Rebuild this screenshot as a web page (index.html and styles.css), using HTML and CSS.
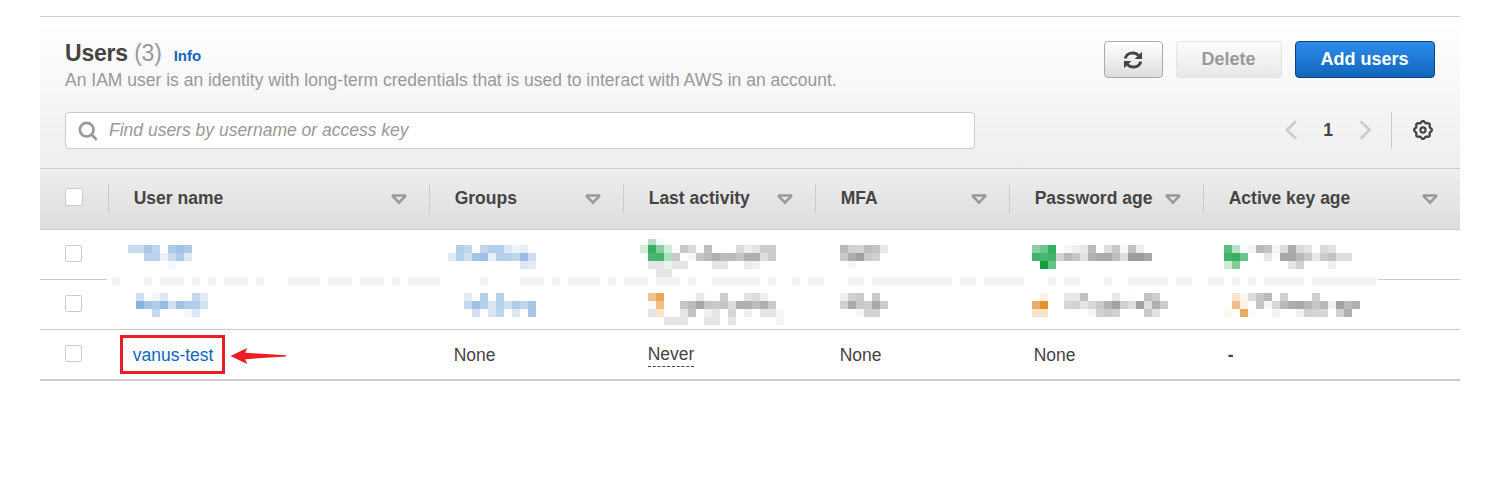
FILE: index.html
```html
<!DOCTYPE html>
<html lang="en">
<head>
<meta charset="utf-8">
<title>Users</title>
<link rel="stylesheet" href="styles.css">
</head>
<body>
<svg width="0" height="0" class="defs">
  <symbol id="sort" viewBox="0 0 18 11"><path d="M2.2 1.6H15.8L9 8.6Z" fill="none" stroke="#999" stroke-width="2.5" stroke-linejoin="miter" stroke-miterlimit="2"/></symbol>
</svg>
<main class="panel">
  <header class="top">
    <div class="heading">
      <div>
        <h1 class="title">Users <span class="count">(3)</span><a class="info">Info</a></h1>
        <p class="desc">An IAM user is an identity with long-term credentials that is used to interact with AWS in an account.</p>
      </div>
      <div class="actions">
        <button class="btn refresh" aria-label="Refresh">
          <svg width="20" height="20" viewBox="0 0 20 20"><path d="M2.3 8.6C3.4 2.7 11.6 1 15.6 5.6M17.7 11.4C16.6 17.3 8.4 19 4.4 14.4" fill="none" stroke="#444" stroke-width="2.9"/><path d="M19 1.8V9H11.6ZM1 18.2V11H8.4Z" fill="#444"/></svg>
        </button>
        <button class="btn delete">Delete</button>
        <button class="btn primary">Add users</button>
      </div>
    </div>
    <div class="tools">
      <div class="search">
        <svg width="20" height="20" viewBox="0 0 20 20" fill="none" stroke="#999" stroke-width="2.7"><circle cx="8.7" cy="8.7" r="6.8"/><path d="M13.4 13.4L18.7 18.7"/></svg>
        <span>Find users by username or access key</span>
      </div>
      <div class="pager">
        <svg width="12" height="20" viewBox="0 0 12 20" fill="none" stroke="#ccc" stroke-width="2.6"><path d="M11 1.2L2 10L11 18.8"/></svg>
        <b class="page">1</b>
        <svg width="12" height="20" viewBox="0 0 12 20" fill="none" stroke="#ccc" stroke-width="2.6"><path d="M1.6 1.2L10.6 10L1.6 18.8"/></svg>
        <span class="divider"></span>
        <svg id="gear" width="20" height="20" viewBox="0 0 20 20" fill="none" stroke="#444"><circle cx="10" cy="10" r="2.6" stroke-width="2.1"/><path id="gear-edge" stroke-width="2.3" stroke-linejoin="round"/></svg>
      </div>
    </div>
  </header>
  <section class="table">
    <div class="row head">
      <div class="check"><i class="box"></i></div>
      <div class="cell">User name<svg class="sort"><use href="#sort"/></svg></div>
      <div class="cell">Groups<svg class="sort"><use href="#sort"/></svg></div>
      <div class="cell">Last activity<svg class="sort"><use href="#sort"/></svg></div>
      <div class="cell">MFA<svg class="sort"><use href="#sort"/></svg></div>
      <div class="cell">Password age<svg class="sort"><use href="#sort"/></svg></div>
      <div class="cell last">Active key age<svg class="sort"><use href="#sort"/></svg></div>
    </div>
    <div class="row"><div class="check"><i class="box"></i></div></div>
    <div class="row"><div class="check"><i class="box"></i></div></div>
    <div class="row final">
      <div class="check"><i class="box"></i></div>
      <div class="cell"><a class="user">vanus-test</a></div>
      <div class="cell">None</div>
      <div class="cell"><span class="never">Never</span></div>
      <div class="cell">None</div>
      <div class="cell">None</div>
      <div class="cell dash">-</div>
    </div>
    <svg id="mosaic" class="mosaic" width="1420" height="100" viewBox="40 230 1420 100" shape-rendering="crispEdges"></svg>
    <div class="callout"></div>
    <svg class="arrow" width="58" height="18" viewBox="0 0 58 18"><path d="M0.5 9L17 1L15.3 5.8L56 8.3V9.5L15.3 12.2L17 17Z" fill="#ed1c24"/></svg>
  </section>
</main>
<script src="script.js"></script>
</body>
</html>
```

FILE: styles.css
```css
* { box-sizing: border-box; }
body { margin: 0; background: #fff; color: #444; font: 17.5px/22px "Liberation Sans", Arial, sans-serif; overflow: hidden; }
.defs { position: absolute; }
.panel { width: 1420px; margin: 16px 0 0 40px; }
.top { height: 153px; padding: 24px 25px 0; border-top: 1px solid #ccc; border-bottom: 1px solid #ccc; background: linear-gradient(#fff, #eee); }
.heading { display: flex; justify-content: space-between; height: 71px; }
.title { margin: 0; font-size: 23px; line-height: 25px; letter-spacing: -.2px; white-space: nowrap; }
.count { color: #999; font-weight: 400; }
.info { margin-left: 12px; font-size: 15px; letter-spacing: 0; color: #1166bb; }
.desc { margin: 3px 0 0; line-height: 18px; color: #999; white-space: nowrap; }
.actions { display: flex; gap: 13px; }
.btn { height: 37px; padding: 0 1px 1px 0; border: 1px solid #aaa; border-radius: 4px; font: bold 18px/34px "Liberation Sans", Arial, sans-serif; color: #444; background: linear-gradient(#fff, #ddd); }
.refresh { width: 59px; display: flex; align-items: center; justify-content: center; padding: 0 1px 0 0; }
.delete { width: 106px; color: #999; border-color: #e3e3e3; background: linear-gradient(#fcfcfc, #e8e8e8); }
.primary { width: 140px; color: #fff; border-color: #0a4280; background: linear-gradient(#2d8cec, #1166bb); }
.tools { display: flex; justify-content: space-between; }
.search { display: flex; align-items: center; gap: 11px; width: 910px; height: 37px; padding: 0 13px 1px 12px; border: 1px solid #ccc; border-radius: 4px; background: #fff; color: #999; font-style: italic; }
.search svg { margin-top: 2px; }
.pager { display: flex; align-items: center; height: 37px; }
.pager > svg { margin-top: -1px; }
.page { width: 62px; margin-top: -1px; text-align: center; }
.divider { width: 1px; height: 37px; margin: 0 21px 0 20px; background: #ccc; }
#gear { margin-right: 2px; }
.table { position: relative; }
.row { display: grid; grid-template-columns: 69px 321px 194px 192px 194px 194px 256px; align-items: center; height: 50px; border-bottom: 1px solid #ccc; }
.head { height: 61px; font-weight: 700; background: linear-gradient(#eee, #ddd); }
.check { padding-left: 25px; }
.head .check, .head .cell { height: 30px; border-right: 1px solid #ccc; display: flex; align-items: center; justify-content: space-between; }
.head .check { justify-content: flex-start; }
.box { display: block; width: 17px; height: 17px; border: 1px solid #ccc; border-radius: 2px; background: #fff; margin-top: -3px; }
.head .box { width: 18px; height: 18px; margin-top: -4px; }
.cell { padding-left: 24px; white-space: nowrap; }
.head .cell { padding: 0 21px 2px 24.7px; }
.head .last { padding-right: 21px; border-right: 0; }
.sort { width: 18px; height: 11px; flex: none; margin-top: 2px; }
.final { height: 51px; border-bottom-width: 2px; }
.final .cell { padding-left: 23.7px; }
.user { color: #1166bb; }
.never { display: inline-block; line-height: 24px; border-bottom: 1px dashed #444; margin-bottom: 1px; }
.dash { font-weight: 700; }
.mosaic { position: absolute; left: 0; top: 61px; }
.callout { position: absolute; left: 80px; top: 166px; width: 105px; height: 39px; border: 3px solid #ed1c24; }
.arrow { position: absolute; left: 190px; top: 178px; }
```

FILE: script.js
```js
// Each entry: top, left, then colours of consecutive 8px squares ("-" leaves one empty).
const runs = `
245 128 c8daee c8daee aac8e6 bdd4ec fcfeff b0cbe8 9fc1e4 afcae8
253 144 bbd3ec bbd3ec e9f1f9 c9dcf0 aecbe8 dde8f5
261 168 f5f9fd
293 136 cfdff0 - f1f6fa dce8f4 - - - c3d8ee e1ebf6
301 136 88b2de a8c6e7 afcbe8 98bce3 d1e0f2 a1c2e5 b1cde9 b1cde9 d3e2f2
309 152 c2d8ef - - - f5f9fd dde9f6
245 456 b3cee9 c0d7ee - bfd6ed b4cfe9 b4cfe9 dbe7f5 eff4fa e6eff8
253 448 e1ebf6 b4cfe9 cfdff1 a1c3e5 9fc0e4 e6eff8 b7d0ea b4cfe9 bdd4ec 9abce3 cbdcf0
261 520 dbe7f5 e2ecf7
293 464 e0eaf5 - b4cfe9 - b7d1ea
301 464 c4d9ef a1c2e5 b3cfe9 d9e6f2 b7d0ea cfdff2 b1cce9 bfd5ed a7c6e6
309 472 d2e1f2 - d9e6f2 bcd4ec - dbe7f4 - a9c6e7
239 648 b3dfc4 f6faf7
245 640 d3ecdd 34ae62 85ce9f d0ecdc fdfdfd c9c9c9 d9d9d9 fbfbfb bfbfbf - - - dbdbdb ececec e4e4e4 cccccc cccccc
253 648 49b772 43b56d ade0bf c8c8c8 - f6f6f6 c6c6c6 bcbcbc aeaeae bcbcbc bbbbbb c5c5c5 b0b0b0 b0b0b0 dddddd cccccc
261 648 e5e5e5 e5e5e5 e7f6ec e5e5e5 e5e5e5 - - - e6e6e6 e6e6e6 - - ebebeb f0f0f0
269 656 e5e5e5 e5e5e5
293 648 f2c28e eaa558 - - - fdfdfd e9e9e9 fdfdfd - cccccc - - e3e3e3 dbdbdb eeeeee
301 648 fefaf6 f2bd86 - - c6c6c6 bcbcbc a7a7a7 c6c6c6 cbcbcb c6c6c6 dddddd b0b0b0 b0b0b0 bdbdbd b0b0b0 cbcbcb
309 648 e6e6e6 fae4cc - - e5e5e5 c3c3c3 - f1f1f1 e6e6e6 - d7d7d7 - efefef - e6e6e6 e6e6e6 f5f5f5
317 664 e5e5e5 e5e5e5 e5e5e5 - - e6e6e6 e6e6e6 - e6e6e6 - - - - - f5f5f5
245 840 bababa d0d0d0 d3d3d3 bebebe c3c3c3 e9e9e9
253 840 c9c9c9 aeaeae a0a0a0 cacaca d0d0d0
261 848 f6f6f6
293 840 eeeeee d0d0d0 cacaca - cacaca
301 840 d0d0d0 aaaaaa c8c8c8 cccccc a8a8a8 cccccc
309 856 f6f6f6 d3d3d3 d3d3d3
245 1032 88d1a2 6cc48c 34b05e - f7f7f7 f0f0f0 e8e8e8 bbbbbb - dedede c8c8c8 f8f8f8 c2c2c2 ededed
253 1032 42b36b 49b671 43b36b d2d2d2 b9b9b9 c6c6c6 e2e2e2 b1b1b1 aaaaaa aaaaaa bfbfbf dedede 9c9c9c 9c9c9c a9a9a9
261 1040 129e3c 66c285
293 1040 fcf2e9 - - e7e7e7 e7e7e7 c1c1c1 - - - e8e8e8 - fdfdfd - c2c2c2 cecece
301 1032 ecab67 e4902c - - d6d6d6 d2d2d2 e3e3e3 d7d7d7 cacaca b3b3b3 a3a3a3 cfcfcf dedede a0a0a0 dedede b0b0b0 cccccc
309 1032 f8e3cc f8e3cc - - - - - f6f6f6 d2d2d2 cacaca d0d0d0 - - - cacaca e2e2e2
245 1224 59bd7e b7e2c6 f9fcfa f4f4f4 b8b8b8 c2c2c2 f7f7f7 dedede acacac dadada e4e4e4 fdfdfd dadada e3e3e3
253 1224 42b36b 36b15e 6cc48c - fdfdfd e7e7e7 fcfcfc a7a7a7 a7a7a7 bababa cacaca e9e9e9 cccccc c2c2c2 dddddd dddddd
261 1224 d0ead8 7fcd99 - - - - - - e3e3e3 d2d2d2 - - - efefef
293 1232 f8e4cd fdf8f3 dcdcdc c7c7c7 bababa - d0d0d0 - - - cecece
301 1232 f0bd84 fdf3ea - c6c6c6 f6f6f6 d7d7d7 bababa adadad a9a9a9 b7b7b7 c6c6c6 b8b8b8 f1f1f1 a2a2a2 b9b9b9 b0b0b0
309 1224 fef8f0 - ecaa62 fdf9f5 - - f2f2f2 - - f0f0f0 d0d0d0 d4d4d4 d6d6d6 - d0d0d0 b0b0b0`;

// Faint squares along the first row border: start and end of each run.
const bars = [[112,120],[144,152],[160,184],[192,200],[208,216],[224,248],[256,264],[288,320],[328,352],[360,384],[392,400],[408,440],[480,488],[520,544],[552,560],[568,600],[608,616],[624,648],[656,680],[688,696],[712,760],[768,776],[792,800],[808,824],[848,864],[872,952],[960,976],[984,1024],[1048,1056],[1064,1080],[1104,1112],[1128,1168],[1176,1192],[1208,1224],[1232,1240],[1248,1256],[1264,1304],[1312,1376]];

const mosaic = document.getElementById("mosaic");
function square(x, y, w, h, fill) {
  const r = document.createElementNS("http://www.w3.org/2000/svg", "rect");
  Object.entries({ x, y, width: w, height: h, fill }).forEach(([k, v]) => r.setAttribute(k, v));
  mosaic.appendChild(r);
}
square(107, 277, 1271, 8, "#fff");
bars.forEach(([a, b]) => square(a, 277, b - a, 8, "#f3f3f3"));
runs.trim().split("\n").forEach(line => {
  const [y, x, ...colours] = line.split(" ");
  colours.forEach((c, i) => { if (c !== "-") square(+x + i * 8, +y, 8, y === "239" ? 6 : 8, "#" + c); });
});

// Eight-lobed gear outline.
let d = "";
for (let i = 0; i < 96; i++) {
  const t = i / 96 * Math.PI * 2, r = 8.1 + 0.8 * Math.cos(8 * t);
  d += (i ? "L" : "M") + (10 + r * Math.cos(t)).toFixed(2) + " " + (10 + r * Math.sin(t)).toFixed(2);
}
document.getElementById("gear-edge").setAttribute("d", d + "Z");
```
